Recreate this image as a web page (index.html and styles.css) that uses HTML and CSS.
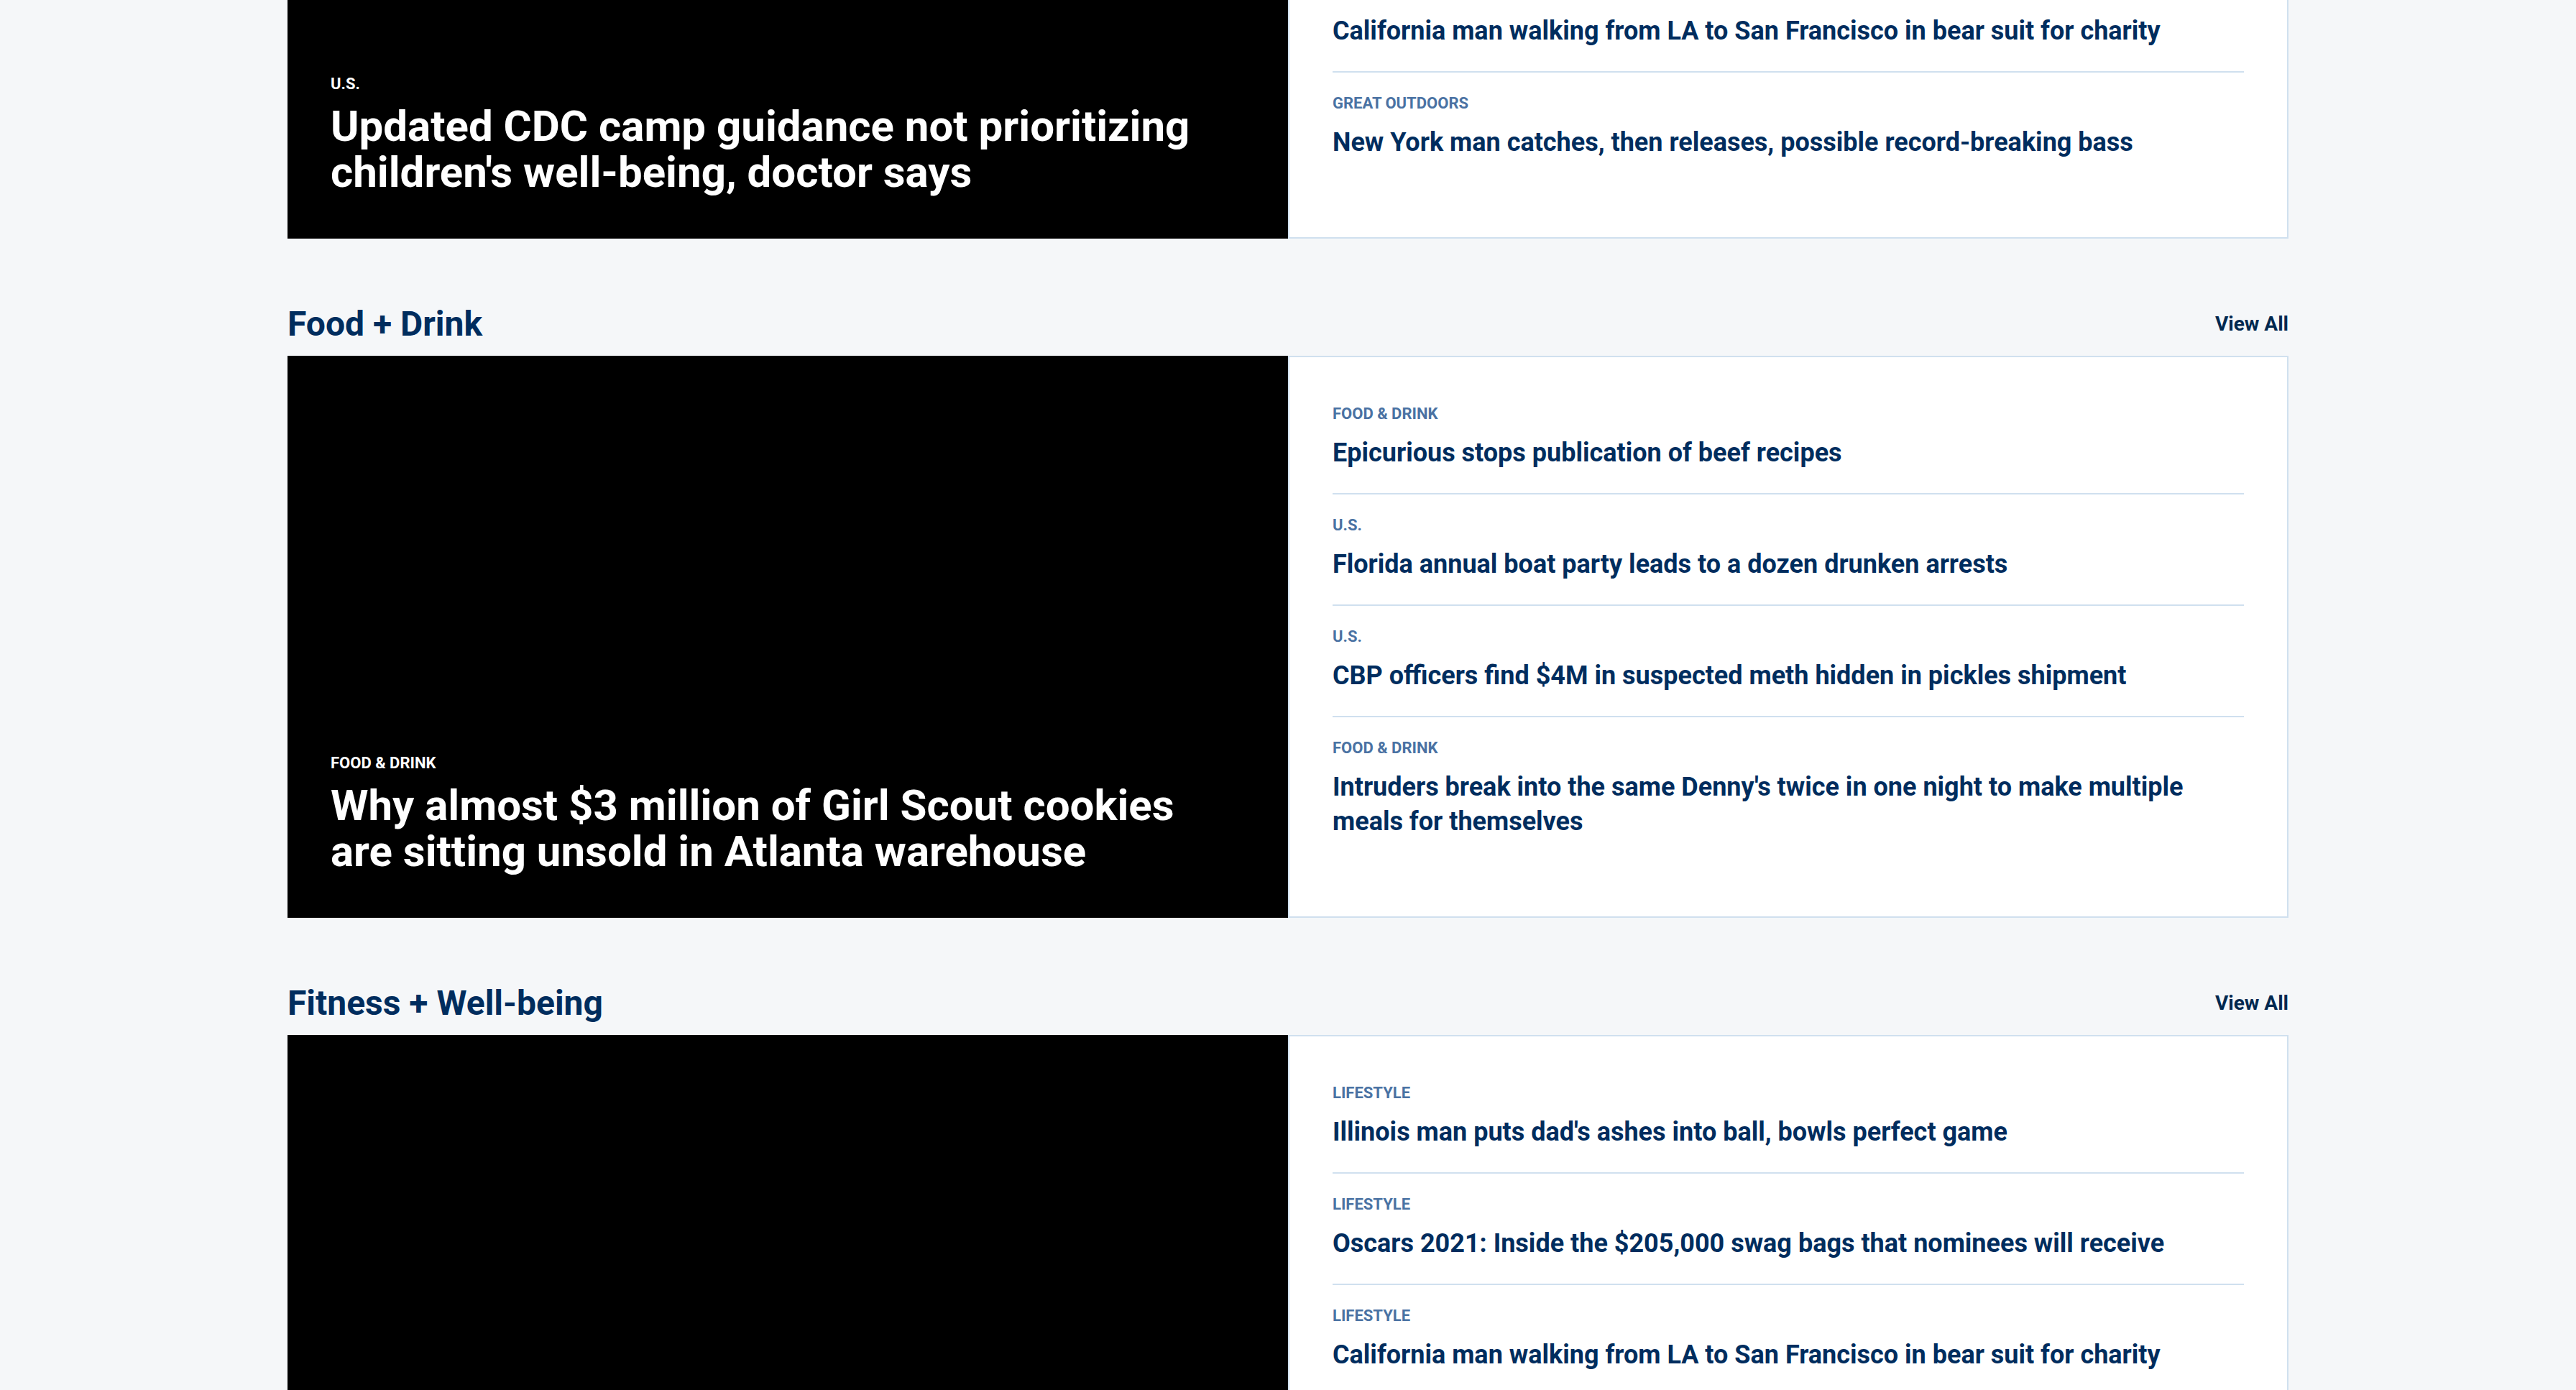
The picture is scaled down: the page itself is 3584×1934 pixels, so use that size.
FILE: index.html
```html
<!DOCTYPE html>
<html lang="en">
<head>
<meta charset="utf-8">
<title>Lifestyle</title>
<link rel="stylesheet" href="styles.css">
</head>
<body>
<main class="page">
  <section class="section">
    <div class="section-head">
      <h2 class="section-title">Travel + Outdoors</h2>
      <a class="view-all" href="#">View All</a>
    </div>
    <div class="block">
      <a class="media" href="#">
        <span class="media-label">U.S.</span>
        <span class="media-title">Updated CDC camp guidance not prioritizing children's well-being, doctor says</span>
      </a>
      <ul class="list">
        <li class="item"><span class="item-label">Travel</span><a class="item-title" href="#">Airline passengers face new rules as summer travel begins</a></li>
        <li class="item"><span class="item-label">Great Outdoors</span><a class="item-title" href="#">Hikers rescued after spending two nights stranded on a remote mountain trail in heavy fog</a></li>
        <li class="item"><span class="item-label">Lifestyle</span><a class="item-title" href="#">California man walking from LA to San Francisco in bear suit for charity</a></li>
        <li class="item"><span class="item-label">Great Outdoors</span><a class="item-title" href="#">New York man catches, then releases, possible record-breaking bass</a></li>
      </ul>
    </div>
  </section>

  <section class="section">
    <div class="section-head">
      <h2 class="section-title">Food + Drink</h2>
      <a class="view-all" href="#">View All</a>
    </div>
    <div class="block">
      <a class="media" href="#">
        <span class="media-label">Food &amp; Drink</span>
        <span class="media-title">Why almost $3 million of Girl Scout cookies are sitting unsold in Atlanta warehouse</span>
      </a>
      <ul class="list">
        <li class="item"><span class="item-label">Food &amp; Drink</span><a class="item-title" href="#">Epicurious stops publication of beef recipes</a></li>
        <li class="item"><span class="item-label">U.S.</span><a class="item-title" href="#">Florida annual boat party leads to a dozen drunken arrests</a></li>
        <li class="item"><span class="item-label">U.S.</span><a class="item-title" href="#">CBP officers find $4M in suspected meth hidden in pickles shipment</a></li>
        <li class="item"><span class="item-label">Food &amp; Drink</span><a class="item-title" href="#">Intruders break into the same Denny's twice in one night to make multiple meals for themselves</a></li>
      </ul>
    </div>
  </section>

  <section class="section">
    <div class="section-head">
      <h2 class="section-title">Fitness + Well-being</h2>
      <a class="view-all" href="#">View All</a>
    </div>
    <div class="block">
      <a class="media" href="#">
        <span class="media-label">Lifestyle</span>
        <span class="media-title">Fitness trends to watch this year as gyms reopen and people return to their workout routines at home and outdoors</span>
      </a>
      <ul class="list">
        <li class="item"><span class="item-label">Lifestyle</span><a class="item-title" href="#">Illinois man puts dad's ashes into ball, bowls perfect game</a></li>
        <li class="item"><span class="item-label">Lifestyle</span><a class="item-title" href="#">Oscars 2021: Inside the $205,000 swag bags that nominees will receive</a></li>
        <li class="item"><span class="item-label">Lifestyle</span><a class="item-title" href="#">California man walking from LA to San Francisco in bear suit for charity</a></li>
      </ul>
    </div>
  </section>
</main>
</body>
</html>
```

FILE: styles.css
```css
html, body {
  margin: 0;
  padding: 0;
  background: #f5f7f9;
}

body {
  font-family: Roboto, "Liberation Sans", Arial, sans-serif;
  font-weight: 700;
  overflow: hidden;
}

.page {
  width: 2784px;
  margin: -522px auto 0;
}

.section + .section {
  margin-top: 91px;
}

.section-head {
  display: flex;
  justify-content: space-between;
  align-items: center;
  height: 56px;
  margin-bottom: 16px;
}

.section-title {
  margin: 0;
  font-size: 48px;
  line-height: 56px;
  font-weight: 700;
  color: #002d5e;
}

.view-all {
  font-size: 28px;
  line-height: 36px;
  color: #01284f;
  text-decoration: none;
}

.block {
  display: grid;
  grid-template-columns: 1fr 1fr;
}

.media {
  display: flex;
  flex-direction: column;
  justify-content: flex-end;
  aspect-ratio: 1392 / 782;
  background: #000;
  padding: 60px 120px 60px 60px;
  box-sizing: border-box;
  text-decoration: none;
  color: #fff;
}

.media-label {
  font-size: 22px;
  line-height: 22px;
  text-transform: uppercase;
  margin-bottom: 16px;
}

.media-title {
  font-size: 60px;
  line-height: 64px;
}

.list {
  list-style: none;
  margin: 0;
  padding: 36px 60px 74px;
  background: #fff;
  border: 2px solid #d0e0ef;
}

.item {
  display: flex;
  flex-direction: column;
  padding: 32px 0;
  border-bottom: 2px solid #d0e0ef;
}

.item:last-child {
  border-bottom: 0;
}

.item-label {
  font-size: 22px;
  line-height: 22px;
  text-transform: uppercase;
  color: #4a72a3;
  margin-bottom: 19px;
}

.item-title {
  font-size: 36px;
  line-height: 48px;
  color: #002d5e;
  text-decoration: none;
}
```
